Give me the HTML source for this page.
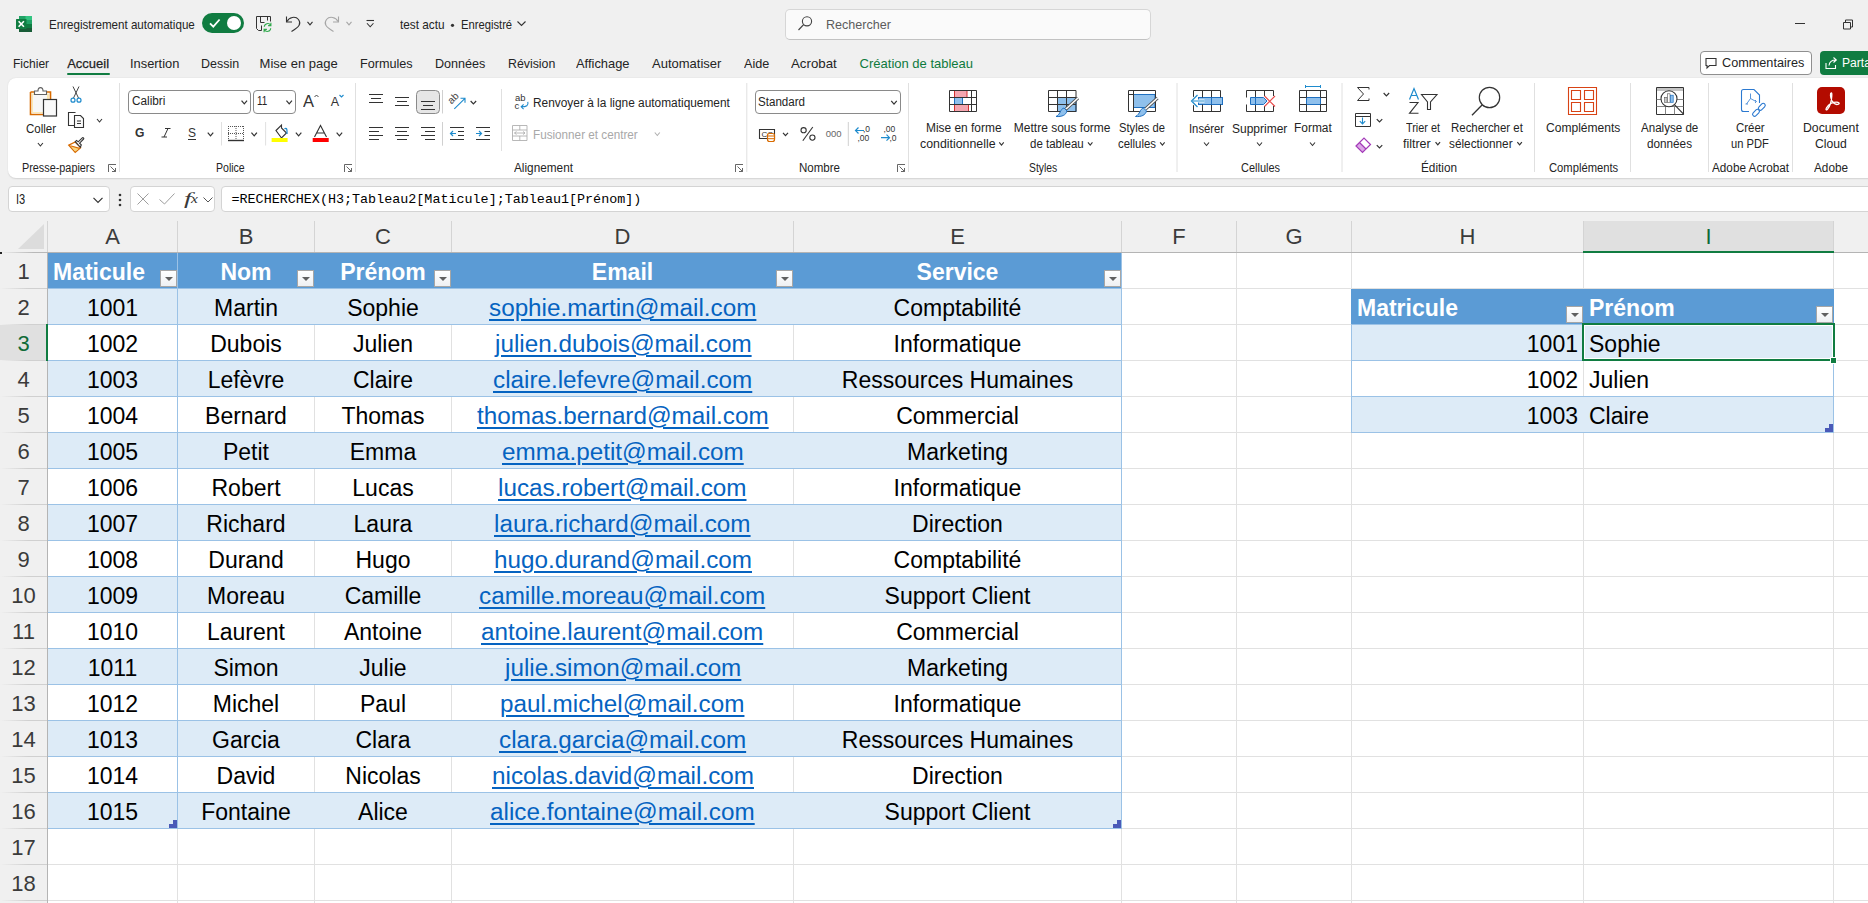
<!DOCTYPE html><html><head><meta charset="utf-8"><style>
html,body{margin:0;padding:0;overflow:hidden}
body{width:1868px;height:903px;overflow:hidden;position:relative;background:#f0f0f0;font-family:"Liberation Sans",sans-serif}
.t{position:absolute;white-space:nowrap}
.r{position:absolute;box-sizing:content-box}
.box{background:#fff;border:1px solid #d4d4d4;border-radius:4px;box-sizing:border-box}
.fb{width:15px;height:15px;border:1px solid #a6a6a6;background:linear-gradient(#fff,#eef0f3)}
.fb:after{content:"";position:absolute;left:3.5px;top:5.8px;border-left:4px solid transparent;border-right:4px solid transparent;border-top:4.5px solid #606060}
</style></head><body>
<div class="r" style="left:48px;top:253px;width:1820px;height:650px;background:#fff;"></div>
<div class="r" style="left:0px;top:221px;width:1868px;height:31px;background:#f0f0f0;"></div>
<div class="r" style="left:0px;top:253px;width:47px;height:650px;background:#f0f0f0;"></div>
<div class="r" style="left:1584px;top:221px;width:249px;height:31px;background:#e0e0e0;"></div>
<div class="r" style="left:0px;top:325px;width:46px;height:35px;background:#e0e0e0;"></div>
<div class="r" style="left:177px;top:221px;width:1px;height:31px;background:#d4d4d4;"></div>
<div class="r" style="left:314px;top:221px;width:1px;height:31px;background:#d4d4d4;"></div>
<div class="r" style="left:451px;top:221px;width:1px;height:31px;background:#d4d4d4;"></div>
<div class="r" style="left:793px;top:221px;width:1px;height:31px;background:#d4d4d4;"></div>
<div class="r" style="left:1121px;top:221px;width:1px;height:31px;background:#d4d4d4;"></div>
<div class="r" style="left:1236px;top:221px;width:1px;height:31px;background:#d4d4d4;"></div>
<div class="r" style="left:1351px;top:221px;width:1px;height:31px;background:#d4d4d4;"></div>
<div class="r" style="left:1583px;top:221px;width:1px;height:31px;background:#d4d4d4;"></div>
<div class="r" style="left:1833px;top:221px;width:1px;height:31px;background:#d4d4d4;"></div>
<div class="r" style="left:48px;top:252px;width:1868px;height:1px;background:#b4b4b4;"></div>
<div class="r" style="left:0px;top:252px;width:48px;height:1px;background:linear-gradient(90deg,#f0f0f0,#b8b8b8 70%);"></div>
<div class="r" style="left:47px;top:221px;width:1px;height:31px;background:#d4d4d4;"></div>
<div class="r" style="left:47px;top:252px;width:1px;height:651px;background:#b4b4b4;"></div>
<div class="r" style="left:0px;top:288px;width:47px;height:1px;background:linear-gradient(90deg,#f0f0f0,#d0d0d0 60%);"></div>
<div class="r" style="left:0px;top:324px;width:47px;height:1px;background:linear-gradient(90deg,#f0f0f0,#d0d0d0 60%);"></div>
<div class="r" style="left:0px;top:360px;width:47px;height:1px;background:linear-gradient(90deg,#f0f0f0,#d0d0d0 60%);"></div>
<div class="r" style="left:0px;top:396px;width:47px;height:1px;background:linear-gradient(90deg,#f0f0f0,#d0d0d0 60%);"></div>
<div class="r" style="left:0px;top:432px;width:47px;height:1px;background:linear-gradient(90deg,#f0f0f0,#d0d0d0 60%);"></div>
<div class="r" style="left:0px;top:468px;width:47px;height:1px;background:linear-gradient(90deg,#f0f0f0,#d0d0d0 60%);"></div>
<div class="r" style="left:0px;top:504px;width:47px;height:1px;background:linear-gradient(90deg,#f0f0f0,#d0d0d0 60%);"></div>
<div class="r" style="left:0px;top:540px;width:47px;height:1px;background:linear-gradient(90deg,#f0f0f0,#d0d0d0 60%);"></div>
<div class="r" style="left:0px;top:576px;width:47px;height:1px;background:linear-gradient(90deg,#f0f0f0,#d0d0d0 60%);"></div>
<div class="r" style="left:0px;top:612px;width:47px;height:1px;background:linear-gradient(90deg,#f0f0f0,#d0d0d0 60%);"></div>
<div class="r" style="left:0px;top:648px;width:47px;height:1px;background:linear-gradient(90deg,#f0f0f0,#d0d0d0 60%);"></div>
<div class="r" style="left:0px;top:684px;width:47px;height:1px;background:linear-gradient(90deg,#f0f0f0,#d0d0d0 60%);"></div>
<div class="r" style="left:0px;top:720px;width:47px;height:1px;background:linear-gradient(90deg,#f0f0f0,#d0d0d0 60%);"></div>
<div class="r" style="left:0px;top:756px;width:47px;height:1px;background:linear-gradient(90deg,#f0f0f0,#d0d0d0 60%);"></div>
<div class="r" style="left:0px;top:792px;width:47px;height:1px;background:linear-gradient(90deg,#f0f0f0,#d0d0d0 60%);"></div>
<div class="r" style="left:0px;top:828px;width:47px;height:1px;background:linear-gradient(90deg,#f0f0f0,#d0d0d0 60%);"></div>
<div class="r" style="left:0px;top:864px;width:47px;height:1px;background:linear-gradient(90deg,#f0f0f0,#d0d0d0 60%);"></div>
<div class="r" style="left:0px;top:900px;width:47px;height:1px;background:linear-gradient(90deg,#f0f0f0,#d0d0d0 60%);"></div>
<div class="r" style="left:0px;top:252px;width:2px;height:2px;background:#222;"></div>
<svg class="r" style="left:14px;top:222px;" width="32" height="30" viewBox="0 0 32 30" fill="none"><path d="M4 27 L30 27 L30 2 Z" fill="#dcdcdc"/></svg>
<div class="r" style="left:177px;top:253px;width:1px;height:650px;background:#e1e1e1;"></div>
<div class="r" style="left:314px;top:253px;width:1px;height:650px;background:#e1e1e1;"></div>
<div class="r" style="left:451px;top:253px;width:1px;height:650px;background:#e1e1e1;"></div>
<div class="r" style="left:793px;top:253px;width:1px;height:650px;background:#e1e1e1;"></div>
<div class="r" style="left:1121px;top:253px;width:1px;height:650px;background:#e1e1e1;"></div>
<div class="r" style="left:1236px;top:253px;width:1px;height:650px;background:#e1e1e1;"></div>
<div class="r" style="left:1351px;top:253px;width:1px;height:650px;background:#e1e1e1;"></div>
<div class="r" style="left:1583px;top:253px;width:1px;height:650px;background:#e1e1e1;"></div>
<div class="r" style="left:1833px;top:253px;width:1px;height:650px;background:#e1e1e1;"></div>
<div class="r" style="left:48px;top:288px;width:1820px;height:1px;background:#e1e1e1;"></div>
<div class="r" style="left:48px;top:324px;width:1820px;height:1px;background:#e1e1e1;"></div>
<div class="r" style="left:48px;top:360px;width:1820px;height:1px;background:#e1e1e1;"></div>
<div class="r" style="left:48px;top:396px;width:1820px;height:1px;background:#e1e1e1;"></div>
<div class="r" style="left:48px;top:432px;width:1820px;height:1px;background:#e1e1e1;"></div>
<div class="r" style="left:48px;top:468px;width:1820px;height:1px;background:#e1e1e1;"></div>
<div class="r" style="left:48px;top:504px;width:1820px;height:1px;background:#e1e1e1;"></div>
<div class="r" style="left:48px;top:540px;width:1820px;height:1px;background:#e1e1e1;"></div>
<div class="r" style="left:48px;top:576px;width:1820px;height:1px;background:#e1e1e1;"></div>
<div class="r" style="left:48px;top:612px;width:1820px;height:1px;background:#e1e1e1;"></div>
<div class="r" style="left:48px;top:648px;width:1820px;height:1px;background:#e1e1e1;"></div>
<div class="r" style="left:48px;top:684px;width:1820px;height:1px;background:#e1e1e1;"></div>
<div class="r" style="left:48px;top:720px;width:1820px;height:1px;background:#e1e1e1;"></div>
<div class="r" style="left:48px;top:756px;width:1820px;height:1px;background:#e1e1e1;"></div>
<div class="r" style="left:48px;top:792px;width:1820px;height:1px;background:#e1e1e1;"></div>
<div class="r" style="left:48px;top:828px;width:1820px;height:1px;background:#e1e1e1;"></div>
<div class="r" style="left:48px;top:864px;width:1820px;height:1px;background:#e1e1e1;"></div>
<div class="r" style="left:48px;top:900px;width:1820px;height:1px;background:#e1e1e1;"></div>
<div class="t" style="left:105.16px;top:226.38px;font-size:22px;line-height:22px;color:#3b3b3b;font-family:'Liberation Sans', sans-serif;">A</div>
<div class="t" style="left:238.66px;top:226.38px;font-size:22px;line-height:22px;color:#3b3b3b;font-family:'Liberation Sans', sans-serif;">B</div>
<div class="t" style="left:375.06px;top:226.38px;font-size:22px;line-height:22px;color:#3b3b3b;font-family:'Liberation Sans', sans-serif;">C</div>
<div class="t" style="left:614.56px;top:226.38px;font-size:22px;line-height:22px;color:#3b3b3b;font-family:'Liberation Sans', sans-serif;">D</div>
<div class="t" style="left:950.16px;top:226.38px;font-size:22px;line-height:22px;color:#3b3b3b;font-family:'Liberation Sans', sans-serif;">E</div>
<div class="t" style="left:1172.28px;top:226.38px;font-size:22px;line-height:22px;color:#3b3b3b;font-family:'Liberation Sans', sans-serif;">F</div>
<div class="t" style="left:1285.44px;top:226.38px;font-size:22px;line-height:22px;color:#3b3b3b;font-family:'Liberation Sans', sans-serif;">G</div>
<div class="t" style="left:1459.56px;top:226.38px;font-size:22px;line-height:22px;color:#3b3b3b;font-family:'Liberation Sans', sans-serif;">H</div>
<div class="t" style="left:1705.44px;top:226.38px;font-size:22px;line-height:22px;color:#0f6b37;font-family:'Liberation Sans', sans-serif;">I</div>
<div class="r" style="left:1583px;top:251px;width:251px;height:2px;background:#107c41;"></div>
<div class="r" style="left:46px;top:324px;width:2px;height:37px;background:#107c41;"></div>
<div class="t" style="left:17.38px;top:261.38px;font-size:22px;line-height:22px;color:#3b3b3b;font-family:'Liberation Sans', sans-serif;">1</div>
<div class="t" style="left:17.38px;top:297.38px;font-size:22px;line-height:22px;color:#3b3b3b;font-family:'Liberation Sans', sans-serif;">2</div>
<div class="t" style="left:17.38px;top:333.38px;font-size:22px;line-height:22px;color:#0f6b37;font-family:'Liberation Sans', sans-serif;">3</div>
<div class="t" style="left:17.38px;top:369.38px;font-size:22px;line-height:22px;color:#3b3b3b;font-family:'Liberation Sans', sans-serif;">4</div>
<div class="t" style="left:17.38px;top:405.38px;font-size:22px;line-height:22px;color:#3b3b3b;font-family:'Liberation Sans', sans-serif;">5</div>
<div class="t" style="left:17.38px;top:441.38px;font-size:22px;line-height:22px;color:#3b3b3b;font-family:'Liberation Sans', sans-serif;">6</div>
<div class="t" style="left:17.38px;top:477.38px;font-size:22px;line-height:22px;color:#3b3b3b;font-family:'Liberation Sans', sans-serif;">7</div>
<div class="t" style="left:17.38px;top:513.38px;font-size:22px;line-height:22px;color:#3b3b3b;font-family:'Liberation Sans', sans-serif;">8</div>
<div class="t" style="left:17.38px;top:549.38px;font-size:22px;line-height:22px;color:#3b3b3b;font-family:'Liberation Sans', sans-serif;">9</div>
<div class="t" style="left:11.27px;top:585.38px;font-size:22px;line-height:22px;color:#3b3b3b;font-family:'Liberation Sans', sans-serif;">10</div>
<div class="t" style="left:12.08px;top:621.38px;font-size:22px;line-height:22px;color:#3b3b3b;font-family:'Liberation Sans', sans-serif;">11</div>
<div class="t" style="left:11.27px;top:657.38px;font-size:22px;line-height:22px;color:#3b3b3b;font-family:'Liberation Sans', sans-serif;">12</div>
<div class="t" style="left:11.27px;top:693.38px;font-size:22px;line-height:22px;color:#3b3b3b;font-family:'Liberation Sans', sans-serif;">13</div>
<div class="t" style="left:11.27px;top:729.38px;font-size:22px;line-height:22px;color:#3b3b3b;font-family:'Liberation Sans', sans-serif;">14</div>
<div class="t" style="left:11.27px;top:765.38px;font-size:22px;line-height:22px;color:#3b3b3b;font-family:'Liberation Sans', sans-serif;">15</div>
<div class="t" style="left:11.27px;top:801.38px;font-size:22px;line-height:22px;color:#3b3b3b;font-family:'Liberation Sans', sans-serif;">16</div>
<div class="t" style="left:11.27px;top:837.38px;font-size:22px;line-height:22px;color:#3b3b3b;font-family:'Liberation Sans', sans-serif;">17</div>
<div class="t" style="left:11.27px;top:873.38px;font-size:22px;line-height:22px;color:#3b3b3b;font-family:'Liberation Sans', sans-serif;">18</div>
<div class="r" style="left:48px;top:253px;width:1073px;height:35px;background:#5b9bd5;"></div>
<div class="r" style="left:48px;top:288px;width:1074px;height:1px;background:#9bc2e6;"></div>
<div class="r" style="left:48px;top:289px;width:1073px;height:35px;background:#ddebf7;"></div>
<div class="r" style="left:48px;top:324px;width:1074px;height:1px;background:#9bc2e6;"></div>
<div class="r" style="left:48px;top:360px;width:1074px;height:1px;background:#9bc2e6;"></div>
<div class="r" style="left:48px;top:361px;width:1073px;height:35px;background:#ddebf7;"></div>
<div class="r" style="left:48px;top:396px;width:1074px;height:1px;background:#9bc2e6;"></div>
<div class="r" style="left:48px;top:432px;width:1074px;height:1px;background:#9bc2e6;"></div>
<div class="r" style="left:48px;top:433px;width:1073px;height:35px;background:#ddebf7;"></div>
<div class="r" style="left:48px;top:468px;width:1074px;height:1px;background:#9bc2e6;"></div>
<div class="r" style="left:48px;top:504px;width:1074px;height:1px;background:#9bc2e6;"></div>
<div class="r" style="left:48px;top:505px;width:1073px;height:35px;background:#ddebf7;"></div>
<div class="r" style="left:48px;top:540px;width:1074px;height:1px;background:#9bc2e6;"></div>
<div class="r" style="left:48px;top:576px;width:1074px;height:1px;background:#9bc2e6;"></div>
<div class="r" style="left:48px;top:577px;width:1073px;height:35px;background:#ddebf7;"></div>
<div class="r" style="left:48px;top:612px;width:1074px;height:1px;background:#9bc2e6;"></div>
<div class="r" style="left:48px;top:648px;width:1074px;height:1px;background:#9bc2e6;"></div>
<div class="r" style="left:48px;top:649px;width:1073px;height:35px;background:#ddebf7;"></div>
<div class="r" style="left:48px;top:684px;width:1074px;height:1px;background:#9bc2e6;"></div>
<div class="r" style="left:48px;top:720px;width:1074px;height:1px;background:#9bc2e6;"></div>
<div class="r" style="left:48px;top:721px;width:1073px;height:35px;background:#ddebf7;"></div>
<div class="r" style="left:48px;top:756px;width:1074px;height:1px;background:#9bc2e6;"></div>
<div class="r" style="left:48px;top:792px;width:1074px;height:1px;background:#9bc2e6;"></div>
<div class="r" style="left:48px;top:793px;width:1073px;height:35px;background:#ddebf7;"></div>
<div class="r" style="left:48px;top:828px;width:1074px;height:1px;background:#9bc2e6;"></div>
<div class="r" style="left:177px;top:253px;width:1px;height:575px;background:#9bc2e6;"></div>
<div class="r" style="left:1121px;top:253px;width:1px;height:576px;background:#9bc2e6;"></div>
<svg class="r" style="left:169px;top:820px;" width="8" height="8" viewBox="0 0 8 8" fill="none"><path d="M8 0 V8 H0 V4 H4 V0 Z" fill="#4a5ab8"/></svg>
<svg class="r" style="left:1113px;top:820px;" width="8" height="8" viewBox="0 0 8 8" fill="none"><path d="M8 0 V8 H0 V4 H4 V0 Z" fill="#4a5ab8"/></svg>
<div class="t" style="left:53.00px;top:260.53px;font-size:23px;line-height:23px;color:#fff;font-family:'Liberation Sans', sans-serif;font-weight:700;">Maticule</div>
<div class="r fb" style="left:160px;top:270px"></div>
<div class="t" style="left:220.45px;top:260.53px;font-size:23px;line-height:23px;color:#fff;font-family:'Liberation Sans', sans-serif;font-weight:700;">Nom</div>
<div class="r fb" style="left:297px;top:270px"></div>
<div class="t" style="left:340.19px;top:260.53px;font-size:23px;line-height:23px;color:#fff;font-family:'Liberation Sans', sans-serif;font-weight:700;">Prénom</div>
<div class="r fb" style="left:434px;top:270px"></div>
<div class="t" style="left:591.82px;top:260.53px;font-size:23px;line-height:23px;color:#fff;font-family:'Liberation Sans', sans-serif;font-weight:700;">Email</div>
<div class="r fb" style="left:776px;top:270px"></div>
<div class="t" style="left:916.57px;top:260.53px;font-size:23px;line-height:23px;color:#fff;font-family:'Liberation Sans', sans-serif;font-weight:700;">Service</div>
<div class="r fb" style="left:1104px;top:270px"></div>
<div class="t" style="left:86.91px;top:296.53px;font-size:23px;line-height:23px;color:#000;font-family:'Liberation Sans', sans-serif;">1001</div>
<div class="t" style="left:214.05px;top:296.53px;font-size:23px;line-height:23px;color:#000;font-family:'Liberation Sans', sans-serif;">Martin</div>
<div class="t" style="left:347.19px;top:296.53px;font-size:23px;line-height:23px;color:#000;font-family:'Liberation Sans', sans-serif;">Sophie</div>
<div class="t" style="left:488.81px;top:296.53px;font-size:23px;line-height:23px;color:#0563c1;font-family:'Liberation Sans', sans-serif;transform:scaleX(1.0550);transform-origin:0 0;text-decoration:underline;text-decoration-thickness:2px;text-underline-offset:3px;">sophie.martin@mail.com</div>
<div class="t" style="left:893.58px;top:296.53px;font-size:23px;line-height:23px;color:#000;font-family:'Liberation Sans', sans-serif;">Comptabilité</div>
<div class="t" style="left:86.91px;top:332.53px;font-size:23px;line-height:23px;color:#000;font-family:'Liberation Sans', sans-serif;">1002</div>
<div class="t" style="left:210.20px;top:332.53px;font-size:23px;line-height:23px;color:#000;font-family:'Liberation Sans', sans-serif;">Dubois</div>
<div class="t" style="left:352.95px;top:332.53px;font-size:23px;line-height:23px;color:#000;font-family:'Liberation Sans', sans-serif;">Julien</div>
<div class="t" style="left:494.50px;top:332.53px;font-size:23px;line-height:23px;color:#0563c1;font-family:'Liberation Sans', sans-serif;transform:scaleX(1.0550);transform-origin:0 0;text-decoration:underline;text-decoration-thickness:2px;text-underline-offset:3px;">julien.dubois@mail.com</div>
<div class="t" style="left:893.57px;top:332.53px;font-size:23px;line-height:23px;color:#000;font-family:'Liberation Sans', sans-serif;">Informatique</div>
<div class="t" style="left:86.91px;top:368.53px;font-size:23px;line-height:23px;color:#000;font-family:'Liberation Sans', sans-serif;">1003</div>
<div class="t" style="left:207.65px;top:368.53px;font-size:23px;line-height:23px;color:#000;font-family:'Liberation Sans', sans-serif;">Lefèvre</div>
<div class="t" style="left:352.96px;top:368.53px;font-size:23px;line-height:23px;color:#000;font-family:'Liberation Sans', sans-serif;">Claire</div>
<div class="t" style="left:492.86px;top:368.53px;font-size:23px;line-height:23px;color:#0563c1;font-family:'Liberation Sans', sans-serif;transform:scaleX(1.0550);transform-origin:0 0;text-decoration:underline;text-decoration-thickness:2px;text-underline-offset:3px;">claire.lefevre@mail.com</div>
<div class="t" style="left:841.81px;top:368.53px;font-size:23px;line-height:23px;color:#000;font-family:'Liberation Sans', sans-serif;">Ressources Humaines</div>
<div class="t" style="left:86.91px;top:404.53px;font-size:23px;line-height:23px;color:#000;font-family:'Liberation Sans', sans-serif;">1004</div>
<div class="t" style="left:205.08px;top:404.53px;font-size:23px;line-height:23px;color:#000;font-family:'Liberation Sans', sans-serif;">Bernard</div>
<div class="t" style="left:341.46px;top:404.53px;font-size:23px;line-height:23px;color:#000;font-family:'Liberation Sans', sans-serif;">Thomas</div>
<div class="t" style="left:476.67px;top:404.53px;font-size:23px;line-height:23px;color:#0563c1;font-family:'Liberation Sans', sans-serif;transform:scaleX(1.0550);transform-origin:0 0;text-decoration:underline;text-decoration-thickness:2px;text-underline-offset:3px;">thomas.bernard@mail.com</div>
<div class="t" style="left:896.16px;top:404.53px;font-size:23px;line-height:23px;color:#000;font-family:'Liberation Sans', sans-serif;">Commercial</div>
<div class="t" style="left:86.91px;top:440.53px;font-size:23px;line-height:23px;color:#000;font-family:'Liberation Sans', sans-serif;">1005</div>
<div class="t" style="left:222.99px;top:440.53px;font-size:23px;line-height:23px;color:#000;font-family:'Liberation Sans', sans-serif;">Petit</div>
<div class="t" style="left:349.76px;top:440.53px;font-size:23px;line-height:23px;color:#000;font-family:'Liberation Sans', sans-serif;">Emma</div>
<div class="t" style="left:501.64px;top:440.53px;font-size:23px;line-height:23px;color:#0563c1;font-family:'Liberation Sans', sans-serif;transform:scaleX(1.0550);transform-origin:0 0;text-decoration:underline;text-decoration-thickness:2px;text-underline-offset:3px;">emma.petit@mail.com</div>
<div class="t" style="left:907.00px;top:440.53px;font-size:23px;line-height:23px;color:#000;font-family:'Liberation Sans', sans-serif;">Marketing</div>
<div class="t" style="left:86.91px;top:476.53px;font-size:23px;line-height:23px;color:#000;font-family:'Liberation Sans', sans-serif;">1006</div>
<div class="t" style="left:211.49px;top:476.53px;font-size:23px;line-height:23px;color:#000;font-family:'Liberation Sans', sans-serif;">Robert</div>
<div class="t" style="left:352.32px;top:476.53px;font-size:23px;line-height:23px;color:#000;font-family:'Liberation Sans', sans-serif;">Lucas</div>
<div class="t" style="left:498.26px;top:476.53px;font-size:23px;line-height:23px;color:#0563c1;font-family:'Liberation Sans', sans-serif;transform:scaleX(1.0550);transform-origin:0 0;text-decoration:underline;text-decoration-thickness:2px;text-underline-offset:3px;">lucas.robert@mail.com</div>
<div class="t" style="left:893.57px;top:476.53px;font-size:23px;line-height:23px;color:#000;font-family:'Liberation Sans', sans-serif;">Informatique</div>
<div class="t" style="left:86.91px;top:512.53px;font-size:23px;line-height:23px;color:#000;font-family:'Liberation Sans', sans-serif;">1007</div>
<div class="t" style="left:206.37px;top:512.53px;font-size:23px;line-height:23px;color:#000;font-family:'Liberation Sans', sans-serif;">Richard</div>
<div class="t" style="left:353.58px;top:512.53px;font-size:23px;line-height:23px;color:#000;font-family:'Liberation Sans', sans-serif;">Laura</div>
<div class="t" style="left:494.21px;top:512.53px;font-size:23px;line-height:23px;color:#0563c1;font-family:'Liberation Sans', sans-serif;transform:scaleX(1.0550);transform-origin:0 0;text-decoration:underline;text-decoration-thickness:2px;text-underline-offset:3px;">laura.richard@mail.com</div>
<div class="t" style="left:912.12px;top:512.53px;font-size:23px;line-height:23px;color:#000;font-family:'Liberation Sans', sans-serif;">Direction</div>
<div class="t" style="left:86.91px;top:548.53px;font-size:23px;line-height:23px;color:#000;font-family:'Liberation Sans', sans-serif;">1008</div>
<div class="t" style="left:208.28px;top:548.53px;font-size:23px;line-height:23px;color:#000;font-family:'Liberation Sans', sans-serif;">Durand</div>
<div class="t" style="left:355.50px;top:548.53px;font-size:23px;line-height:23px;color:#000;font-family:'Liberation Sans', sans-serif;">Hugo</div>
<div class="t" style="left:493.51px;top:548.53px;font-size:23px;line-height:23px;color:#0563c1;font-family:'Liberation Sans', sans-serif;transform:scaleX(1.0550);transform-origin:0 0;text-decoration:underline;text-decoration-thickness:2px;text-underline-offset:3px;">hugo.durand@mail.com</div>
<div class="t" style="left:893.58px;top:548.53px;font-size:23px;line-height:23px;color:#000;font-family:'Liberation Sans', sans-serif;">Comptabilité</div>
<div class="t" style="left:86.91px;top:584.53px;font-size:23px;line-height:23px;color:#000;font-family:'Liberation Sans', sans-serif;">1009</div>
<div class="t" style="left:207.00px;top:584.53px;font-size:23px;line-height:23px;color:#000;font-family:'Liberation Sans', sans-serif;">Moreau</div>
<div class="t" style="left:344.66px;top:584.53px;font-size:23px;line-height:23px;color:#000;font-family:'Liberation Sans', sans-serif;">Camille</div>
<div class="t" style="left:479.39px;top:584.53px;font-size:23px;line-height:23px;color:#0563c1;font-family:'Liberation Sans', sans-serif;transform:scaleX(1.0550);transform-origin:0 0;text-decoration:underline;text-decoration-thickness:2px;text-underline-offset:3px;">camille.moreau@mail.com</div>
<div class="t" style="left:884.62px;top:584.53px;font-size:23px;line-height:23px;color:#000;font-family:'Liberation Sans', sans-serif;">Support Client</div>
<div class="t" style="left:86.91px;top:620.53px;font-size:23px;line-height:23px;color:#000;font-family:'Liberation Sans', sans-serif;">1010</div>
<div class="t" style="left:206.99px;top:620.53px;font-size:23px;line-height:23px;color:#000;font-family:'Liberation Sans', sans-serif;">Laurent</div>
<div class="t" style="left:343.99px;top:620.53px;font-size:23px;line-height:23px;color:#000;font-family:'Liberation Sans', sans-serif;">Antoine</div>
<div class="t" style="left:481.37px;top:620.53px;font-size:23px;line-height:23px;color:#0563c1;font-family:'Liberation Sans', sans-serif;transform:scaleX(1.0550);transform-origin:0 0;text-decoration:underline;text-decoration-thickness:2px;text-underline-offset:3px;">antoine.laurent@mail.com</div>
<div class="t" style="left:896.16px;top:620.53px;font-size:23px;line-height:23px;color:#000;font-family:'Liberation Sans', sans-serif;">Commercial</div>
<div class="t" style="left:87.78px;top:656.53px;font-size:23px;line-height:23px;color:#000;font-family:'Liberation Sans', sans-serif;">1011</div>
<div class="t" style="left:213.40px;top:656.53px;font-size:23px;line-height:23px;color:#000;font-family:'Liberation Sans', sans-serif;">Simon</div>
<div class="t" style="left:359.34px;top:656.53px;font-size:23px;line-height:23px;color:#000;font-family:'Liberation Sans', sans-serif;">Julie</div>
<div class="t" style="left:504.63px;top:656.53px;font-size:23px;line-height:23px;color:#0563c1;font-family:'Liberation Sans', sans-serif;transform:scaleX(1.0550);transform-origin:0 0;text-decoration:underline;text-decoration-thickness:2px;text-underline-offset:3px;">julie.simon@mail.com</div>
<div class="t" style="left:907.00px;top:656.53px;font-size:23px;line-height:23px;color:#000;font-family:'Liberation Sans', sans-serif;">Marketing</div>
<div class="t" style="left:86.91px;top:692.53px;font-size:23px;line-height:23px;color:#000;font-family:'Liberation Sans', sans-serif;">1012</div>
<div class="t" style="left:212.76px;top:692.53px;font-size:23px;line-height:23px;color:#000;font-family:'Liberation Sans', sans-serif;">Michel</div>
<div class="t" style="left:359.99px;top:692.53px;font-size:23px;line-height:23px;color:#000;font-family:'Liberation Sans', sans-serif;">Paul</div>
<div class="t" style="left:500.28px;top:692.53px;font-size:23px;line-height:23px;color:#0563c1;font-family:'Liberation Sans', sans-serif;transform:scaleX(1.0550);transform-origin:0 0;text-decoration:underline;text-decoration-thickness:2px;text-underline-offset:3px;">paul.michel@mail.com</div>
<div class="t" style="left:893.57px;top:692.53px;font-size:23px;line-height:23px;color:#000;font-family:'Liberation Sans', sans-serif;">Informatique</div>
<div class="t" style="left:86.91px;top:728.53px;font-size:23px;line-height:23px;color:#000;font-family:'Liberation Sans', sans-serif;">1013</div>
<div class="t" style="left:212.12px;top:728.53px;font-size:23px;line-height:23px;color:#000;font-family:'Liberation Sans', sans-serif;">Garcia</div>
<div class="t" style="left:355.50px;top:728.53px;font-size:23px;line-height:23px;color:#000;font-family:'Liberation Sans', sans-serif;">Clara</div>
<div class="t" style="left:498.93px;top:728.53px;font-size:23px;line-height:23px;color:#0563c1;font-family:'Liberation Sans', sans-serif;transform:scaleX(1.0550);transform-origin:0 0;text-decoration:underline;text-decoration-thickness:2px;text-underline-offset:3px;">clara.garcia@mail.com</div>
<div class="t" style="left:841.81px;top:728.53px;font-size:23px;line-height:23px;color:#000;font-family:'Liberation Sans', sans-serif;">Ressources Humaines</div>
<div class="t" style="left:86.91px;top:764.53px;font-size:23px;line-height:23px;color:#000;font-family:'Liberation Sans', sans-serif;">1014</div>
<div class="t" style="left:216.59px;top:764.53px;font-size:23px;line-height:23px;color:#000;font-family:'Liberation Sans', sans-serif;">David</div>
<div class="t" style="left:345.29px;top:764.53px;font-size:23px;line-height:23px;color:#000;font-family:'Liberation Sans', sans-serif;">Nicolas</div>
<div class="t" style="left:491.51px;top:764.53px;font-size:23px;line-height:23px;color:#0563c1;font-family:'Liberation Sans', sans-serif;transform:scaleX(1.0550);transform-origin:0 0;text-decoration:underline;text-decoration-thickness:2px;text-underline-offset:3px;">nicolas.david@mail.com</div>
<div class="t" style="left:912.12px;top:764.53px;font-size:23px;line-height:23px;color:#000;font-family:'Liberation Sans', sans-serif;">Direction</div>
<div class="t" style="left:86.91px;top:800.53px;font-size:23px;line-height:23px;color:#000;font-family:'Liberation Sans', sans-serif;">1015</div>
<div class="t" style="left:201.24px;top:800.53px;font-size:23px;line-height:23px;color:#000;font-family:'Liberation Sans', sans-serif;">Fontaine</div>
<div class="t" style="left:358.07px;top:800.53px;font-size:23px;line-height:23px;color:#000;font-family:'Liberation Sans', sans-serif;">Alice</div>
<div class="t" style="left:490.15px;top:800.53px;font-size:23px;line-height:23px;color:#0563c1;font-family:'Liberation Sans', sans-serif;transform:scaleX(1.0550);transform-origin:0 0;text-decoration:underline;text-decoration-thickness:2px;text-underline-offset:3px;">alice.fontaine@mail.com</div>
<div class="t" style="left:884.62px;top:800.53px;font-size:23px;line-height:23px;color:#000;font-family:'Liberation Sans', sans-serif;">Support Client</div>
<div class="r" style="left:1351px;top:289px;width:483px;height:35px;background:#5b9bd5;"></div>
<div class="r" style="left:1351px;top:324px;width:483px;height:1px;background:#9bc2e6;"></div>
<div class="r" style="left:1351px;top:325px;width:483px;height:35px;background:#ddebf7;"></div>
<div class="r" style="left:1351px;top:360px;width:483px;height:1px;background:#9bc2e6;"></div>
<div class="r" style="left:1351px;top:396px;width:483px;height:1px;background:#9bc2e6;"></div>
<div class="r" style="left:1351px;top:397px;width:483px;height:35px;background:#ddebf7;"></div>
<div class="r" style="left:1351px;top:432px;width:483px;height:1px;background:#9bc2e6;"></div>
<div class="r" style="left:1351px;top:324px;width:1px;height:109px;background:#9bc2e6;"></div>
<div class="r" style="left:1833px;top:324px;width:1px;height:109px;background:#9bc2e6;"></div>
<svg class="r" style="left:1825px;top:424px;" width="8" height="8" viewBox="0 0 8 8" fill="none"><path d="M8 0 V8 H0 V4 H4 V0 Z" fill="#4a5ab8"/></svg>
<div class="t" style="left:1357.00px;top:296.53px;font-size:23px;line-height:23px;color:#fff;font-family:'Liberation Sans', sans-serif;font-weight:700;">Matricule</div>
<div class="t" style="left:1589.00px;top:296.53px;font-size:23px;line-height:23px;color:#fff;font-family:'Liberation Sans', sans-serif;font-weight:700;">Prénom</div>
<div class="r fb" style="left:1566px;top:306px"></div>
<div class="r fb" style="left:1816px;top:306px"></div>
<div class="t" style="left:1526.83px;top:332.53px;font-size:23px;line-height:23px;color:#000;font-family:'Liberation Sans', sans-serif;">1001</div>
<div class="t" style="left:1589.00px;top:332.53px;font-size:23px;line-height:23px;color:#000;font-family:'Liberation Sans', sans-serif;">Sophie</div>
<div class="t" style="left:1526.83px;top:368.53px;font-size:23px;line-height:23px;color:#000;font-family:'Liberation Sans', sans-serif;">1002</div>
<div class="t" style="left:1589.00px;top:368.53px;font-size:23px;line-height:23px;color:#000;font-family:'Liberation Sans', sans-serif;">Julien</div>
<div class="t" style="left:1526.83px;top:404.53px;font-size:23px;line-height:23px;color:#000;font-family:'Liberation Sans', sans-serif;">1003</div>
<div class="t" style="left:1589.00px;top:404.53px;font-size:23px;line-height:23px;color:#000;font-family:'Liberation Sans', sans-serif;">Claire</div>
<div class="r" style="left:1582px;top:323px;width:249px;height:34px;border:2px solid #107c41;"></div>
<div class="r" style="left:1584px;top:325px;width:249px;height:34px;border:1px solid #fff;box-sizing:border-box"></div>
<div class="r" style="left:1830px;top:357px;width:5px;height:5px;background:#107c41;border:1px solid #fff;"></div>
<div class="r box" style="left:8px;top:186px;width:102px;height:26px"></div>
<div class="t" style="left:16.00px;top:192.15px;font-size:14px;line-height:14px;color:#1a1a1a;font-family:'Liberation Sans', sans-serif;transform:scaleX(0.7879);transform-origin:0 0;">I3</div>
<svg class="r" style="left:92px;top:196px;" width="12" height="8" viewBox="0 0 12 8" fill="none"><path d="M1.5 1.8 L6 6.3 L10.5 1.8" stroke="#333" stroke-width="1.2"/></svg>
<svg class="r" style="left:116px;top:192px;" width="8" height="16" viewBox="0 0 8 16" fill="none"><circle cx="4" cy="3" r="1.3" fill="#333"/><circle cx="4" cy="8" r="1.3" fill="#333"/><circle cx="4" cy="13" r="1.3" fill="#333"/></svg>
<div class="r box" style="left:130px;top:186px;width:85px;height:26px"></div>
<div class="r box" style="left:221px;top:186px;width:1700px;height:26px"></div>
<svg class="r" style="left:130px;top:186px;" width="90" height="26" viewBox="0 0 90 26" fill="none"><path d="M7.5 7.5 L18.5 18.5 M18.5 7.5 L7.5 18.5" stroke="#9e9e9e" stroke-width="1"/><path d="M29.5 13.5 L34.5 18 L44.5 7.5" stroke="#9e9e9e" stroke-width="1"/><path d="M73.5 11.5 L78 16 L82.5 11.5" stroke="#555" stroke-width="1"/></svg>
<div class="t" style="left:184.00px;top:190.11px;font-size:17px;line-height:17px;color:#3a3a3a;font-family:'Liberation Serif', serif;font-style:italic;transform:scaleX(1.6423);transform-origin:0 0;">f</div>
<div class="t" style="left:191.20px;top:193.42px;font-size:12.5px;line-height:12.5px;color:#333;font-family:'Liberation Serif', serif;font-style:italic;transform:scaleX(1.2254);transform-origin:0 0;">x</div>
<div class="t" style="left:231.50px;top:192.66px;font-size:13.4px;line-height:13.4px;color:#000;font-family:'Liberation Mono', monospace;">=RECHERCHEX(H3;Tableau2[Maticule];Tableau1[Prénom])</div>
<div class="r" style="left:8px;top:78px;width:1880px;height:99.5px;background:#fff;border-radius:8px;box-shadow:0 0.5px 1.5px rgba(0,0,0,.12)"></div>
<div class="t" style="left:48.50px;top:17.60px;font-size:13px;line-height:13px;color:#242424;font-family:'Liberation Sans', sans-serif;transform:scaleX(0.8927);transform-origin:0 0;">Enregistrement automatique</div>
<div class="t" style="left:400.00px;top:17.90px;font-size:13px;line-height:13px;color:#242424;font-family:'Liberation Sans', sans-serif;transform:scaleX(0.9076);transform-origin:0 0;">test actu</div>
<div class="t" style="left:460.50px;top:17.90px;font-size:13px;line-height:13px;color:#242424;font-family:'Liberation Sans', sans-serif;transform:scaleX(0.8624);transform-origin:0 0;">Enregistré</div>
<div class="r" style="left:785px;top:9px;width:366px;height:31px;background:#fafafa;border:1px solid #d6d6d6;border-bottom-color:#c2c2c2;border-radius:5px;box-sizing:border-box"></div>
<div class="t" style="left:825.80px;top:18.30px;font-size:13px;line-height:13px;color:#5c5c5c;font-family:'Liberation Sans', sans-serif;transform:scaleX(0.9658);transform-origin:0 0;">Rechercher</div>
<div class="r" style="left:1700px;top:51px;width:112px;height:24px;background:#fff;border:1px solid #8f8f8f;border-radius:4px;box-sizing:border-box"></div>
<div class="t" style="left:1722.00px;top:57.02px;font-size:12.5px;line-height:12.5px;color:#242424;font-family:'Liberation Sans', sans-serif;transform:scaleX(1.0138);transform-origin:0 0;">Commentaires</div>
<div class="r" style="left:1820px;top:51px;width:80px;height:24px;background:#107c41;border-radius:4px"></div>
<div class="t" style="left:1841.60px;top:57.02px;font-size:12.5px;line-height:12.5px;color:#fff;font-family:'Liberation Sans', sans-serif;transform:scaleX(0.9700);transform-origin:0 0;">Partager</div>
<div class="t" style="left:12.60px;top:57.00px;font-size:13px;line-height:13px;color:#242424;font-family:'Liberation Sans', sans-serif;transform:scaleX(0.9253);transform-origin:0 0;">Fichier</div>
<div class="t" style="left:67.20px;top:57.00px;font-size:13px;line-height:13px;color:#242424;font-family:'Liberation Sans', sans-serif;-webkit-text-stroke:0.25px #242424;">Accueil</div>
<div class="t" style="left:130.00px;top:57.00px;font-size:13px;line-height:13px;color:#242424;font-family:'Liberation Sans', sans-serif;transform:scaleX(0.9889);transform-origin:0 0;">Insertion</div>
<div class="t" style="left:201.40px;top:57.00px;font-size:13px;line-height:13px;color:#242424;font-family:'Liberation Sans', sans-serif;transform:scaleX(0.9587);transform-origin:0 0;">Dessin</div>
<div class="t" style="left:259.60px;top:57.00px;font-size:13px;line-height:13px;color:#242424;font-family:'Liberation Sans', sans-serif;">Mise en page</div>
<div class="t" style="left:359.80px;top:57.00px;font-size:13px;line-height:13px;color:#242424;font-family:'Liberation Sans', sans-serif;transform:scaleX(0.9726);transform-origin:0 0;">Formules</div>
<div class="t" style="left:435.30px;top:57.00px;font-size:13px;line-height:13px;color:#242424;font-family:'Liberation Sans', sans-serif;transform:scaleX(0.9685);transform-origin:0 0;">Données</div>
<div class="t" style="left:507.50px;top:57.00px;font-size:13px;line-height:13px;color:#242424;font-family:'Liberation Sans', sans-serif;transform:scaleX(0.9488);transform-origin:0 0;">Révision</div>
<div class="t" style="left:576.00px;top:57.00px;font-size:13px;line-height:13px;color:#242424;font-family:'Liberation Sans', sans-serif;transform:scaleX(0.9914);transform-origin:0 0;">Affichage</div>
<div class="t" style="left:652.00px;top:57.00px;font-size:13px;line-height:13px;color:#242424;font-family:'Liberation Sans', sans-serif;">Automatiser</div>
<div class="t" style="left:744.00px;top:57.00px;font-size:13px;line-height:13px;color:#242424;font-family:'Liberation Sans', sans-serif;transform:scaleX(0.9726);transform-origin:0 0;">Aide</div>
<div class="t" style="left:791.00px;top:57.00px;font-size:13px;line-height:13px;color:#242424;font-family:'Liberation Sans', sans-serif;transform:scaleX(1.0201);transform-origin:0 0;">Acrobat</div>
<div class="t" style="left:859.60px;top:57.00px;font-size:13px;line-height:13px;color:#0e7a3d;font-family:'Liberation Sans', sans-serif;">Création de tableau</div>
<div class="t" style="left:25.70px;top:122.74px;font-size:12px;line-height:12px;color:#242424;font-family:'Liberation Sans', sans-serif;transform:scaleX(0.9603);transform-origin:0 0;">Coller</div>
<div class="t" style="left:21.50px;top:161.54px;font-size:12px;line-height:12px;color:#242424;font-family:'Liberation Sans', sans-serif;transform:scaleX(0.9033);transform-origin:0 0;">Presse-papiers</div>
<div class="t" style="left:215.70px;top:161.74px;font-size:12px;line-height:12px;color:#242424;font-family:'Liberation Sans', sans-serif;transform:scaleX(0.8780);transform-origin:0 0;">Police</div>
<div class="t" style="left:532.50px;top:97.44px;font-size:12px;line-height:12px;color:#242424;font-family:'Liberation Sans', sans-serif;transform:scaleX(0.9905);transform-origin:0 0;">Renvoyer à la ligne automatiquement</div>
<div class="t" style="left:514.00px;top:161.74px;font-size:12px;line-height:12px;color:#242424;font-family:'Liberation Sans', sans-serif;transform:scaleX(0.9827);transform-origin:0 0;">Alignement</div>
<div class="t" style="left:799.00px;top:161.74px;font-size:12px;line-height:12px;color:#242424;font-family:'Liberation Sans', sans-serif;transform:scaleX(0.9605);transform-origin:0 0;">Nombre</div>
<div class="t" style="left:925.50px;top:121.94px;font-size:12px;line-height:12px;color:#242424;font-family:'Liberation Sans', sans-serif;transform:scaleX(0.9932);transform-origin:0 0;">Mise en forme</div>
<div class="t" style="left:919.80px;top:137.74px;font-size:12px;line-height:12px;color:#242424;font-family:'Liberation Sans', sans-serif;transform:scaleX(1.0287);transform-origin:0 0;">conditionnelle</div>
<div class="t" style="left:1013.80px;top:121.94px;font-size:12px;line-height:12px;color:#242424;font-family:'Liberation Sans', sans-serif;">Mettre sous forme</div>
<div class="t" style="left:1029.70px;top:137.74px;font-size:12px;line-height:12px;color:#242424;font-family:'Liberation Sans', sans-serif;transform:scaleX(0.9580);transform-origin:0 0;">de tableau</div>
<div class="t" style="left:1119.10px;top:121.94px;font-size:12px;line-height:12px;color:#242424;font-family:'Liberation Sans', sans-serif;transform:scaleX(0.9320);transform-origin:0 0;">Styles de</div>
<div class="t" style="left:1117.70px;top:137.74px;font-size:12px;line-height:12px;color:#242424;font-family:'Liberation Sans', sans-serif;transform:scaleX(0.9495);transform-origin:0 0;">cellules</div>
<div class="t" style="left:1029.30px;top:161.74px;font-size:12px;line-height:12px;color:#242424;font-family:'Liberation Sans', sans-serif;transform:scaleX(0.8600);transform-origin:0 0;">Styles</div>
<div class="t" style="left:1189.00px;top:123.04px;font-size:12px;line-height:12px;color:#242424;font-family:'Liberation Sans', sans-serif;transform:scaleX(0.9372);transform-origin:0 0;">Insérer</div>
<div class="t" style="left:1232.00px;top:123.04px;font-size:12px;line-height:12px;color:#242424;font-family:'Liberation Sans', sans-serif;">Supprimer</div>
<div class="t" style="left:1294.00px;top:121.74px;font-size:12px;line-height:12px;color:#242424;font-family:'Liberation Sans', sans-serif;transform:scaleX(0.9946);transform-origin:0 0;">Format</div>
<div class="t" style="left:1240.50px;top:161.74px;font-size:12px;line-height:12px;color:#242424;font-family:'Liberation Sans', sans-serif;transform:scaleX(0.9137);transform-origin:0 0;">Cellules</div>
<div class="t" style="left:1405.80px;top:121.94px;font-size:12px;line-height:12px;color:#242424;font-family:'Liberation Sans', sans-serif;transform:scaleX(0.9052);transform-origin:0 0;">Trier et</div>
<div class="t" style="left:1403.10px;top:137.64px;font-size:12px;line-height:12px;color:#242424;font-family:'Liberation Sans', sans-serif;transform:scaleX(1.0389);transform-origin:0 0;">filtrer</div>
<div class="t" style="left:1451.30px;top:121.94px;font-size:12px;line-height:12px;color:#242424;font-family:'Liberation Sans', sans-serif;transform:scaleX(0.9539);transform-origin:0 0;">Rechercher et</div>
<div class="t" style="left:1449.30px;top:137.64px;font-size:12px;line-height:12px;color:#242424;font-family:'Liberation Sans', sans-serif;transform:scaleX(0.9829);transform-origin:0 0;">sélectionner</div>
<div class="t" style="left:1420.50px;top:161.54px;font-size:12px;line-height:12px;color:#242424;font-family:'Liberation Sans', sans-serif;transform:scaleX(0.9810);transform-origin:0 0;">Édition</div>
<div class="t" style="left:1545.50px;top:121.94px;font-size:12px;line-height:12px;color:#242424;font-family:'Liberation Sans', sans-serif;transform:scaleX(1.0050);transform-origin:0 0;">Compléments</div>
<div class="t" style="left:1548.50px;top:161.54px;font-size:12px;line-height:12px;color:#242424;font-family:'Liberation Sans', sans-serif;transform:scaleX(0.9348);transform-origin:0 0;">Compléments</div>
<div class="t" style="left:1640.70px;top:121.94px;font-size:12px;line-height:12px;color:#242424;font-family:'Liberation Sans', sans-serif;transform:scaleX(0.9650);transform-origin:0 0;">Analyse de</div>
<div class="t" style="left:1647.00px;top:137.64px;font-size:12px;line-height:12px;color:#242424;font-family:'Liberation Sans', sans-serif;transform:scaleX(0.9773);transform-origin:0 0;">données</div>
<div class="t" style="left:1735.80px;top:121.94px;font-size:12px;line-height:12px;color:#242424;font-family:'Liberation Sans', sans-serif;transform:scaleX(0.9563);transform-origin:0 0;">Créer</div>
<div class="t" style="left:1731.40px;top:137.64px;font-size:12px;line-height:12px;color:#242424;font-family:'Liberation Sans', sans-serif;transform:scaleX(0.9292);transform-origin:0 0;">un PDF</div>
<div class="t" style="left:1711.80px;top:161.54px;font-size:12px;line-height:12px;color:#242424;font-family:'Liberation Sans', sans-serif;transform:scaleX(0.9780);transform-origin:0 0;">Adobe Acrobat</div>
<div class="t" style="left:1803.00px;top:121.94px;font-size:12px;line-height:12px;color:#242424;font-family:'Liberation Sans', sans-serif;transform:scaleX(1.0202);transform-origin:0 0;">Document</div>
<div class="t" style="left:1815.00px;top:137.64px;font-size:12px;line-height:12px;color:#242424;font-family:'Liberation Sans', sans-serif;transform:scaleX(1.0142);transform-origin:0 0;">Cloud</div>
<div class="t" style="left:1813.60px;top:161.54px;font-size:12px;line-height:12px;color:#242424;font-family:'Liberation Sans', sans-serif;transform:scaleX(0.9797);transform-origin:0 0;">Adobe</div>
<div class="t" style="left:532.50px;top:129.24px;font-size:12px;line-height:12px;color:#a8a8a8;font-family:'Liberation Sans', sans-serif;transform:scaleX(0.9750);transform-origin:0 0;">Fusionner et centrer</div>
<div class="r" style="left:128px;top:90px;width:123px;height:24px;border:1px solid #8a8a8a;border-radius:4px;box-sizing:border-box;background:#fff"></div>
<div class="r" style="left:253px;top:90px;width:43px;height:24px;border:1px solid #8a8a8a;border-radius:4px;box-sizing:border-box;background:#fff"></div>
<div class="r" style="left:755px;top:90px;width:146px;height:24px;border:1px solid #8a8a8a;border-radius:4px;box-sizing:border-box;background:#fff"></div>
<div class="t" style="left:758.00px;top:96.12px;font-size:12.5px;line-height:12.5px;color:#242424;font-family:'Liberation Sans', sans-serif;transform:scaleX(0.9263);transform-origin:0 0;">Standard</div>
<div class="r" style="left:67px;top:73px;width:43px;height:2px;background:#107c41;border-radius:1px;"></div>
<div class="t" style="left:131.60px;top:95.12px;font-size:12.5px;line-height:12.5px;color:#242424;font-family:'Liberation Sans', sans-serif;transform:scaleX(0.9428);transform-origin:0 0;">Calibri</div>
<div class="t" style="left:256.80px;top:95.12px;font-size:12.5px;line-height:12.5px;color:#242424;font-family:'Liberation Sans', sans-serif;transform:scaleX(0.7861);transform-origin:0 0;">11</div>
<div class="t" style="left:135.00px;top:126.00px;font-size:13px;line-height:13px;color:#333;font-family:'Liberation Sans', sans-serif;font-weight:700;transform:scaleX(0.9294);transform-origin:0 0;">G</div>
<div class="t" style="left:188.00px;top:126.00px;font-size:13px;line-height:13px;color:#333;font-family:'Liberation Sans', sans-serif;transform:scaleX(0.9226);transform-origin:0 0;">S</div>
<div class="t" style="left:303.00px;top:92.61px;font-size:17px;line-height:17px;color:#333;font-family:'Liberation Sans', sans-serif;transform:scaleX(0.9701);transform-origin:0 0;">A</div>
<div class="t" style="left:330.70px;top:96.12px;font-size:12.5px;line-height:12.5px;color:#333;font-family:'Liberation Sans', sans-serif;">A</div>
<div class="t" style="left:825.80px;top:128.66px;font-size:9.5px;line-height:9.5px;color:#666;font-family:'Liberation Sans', sans-serif;">000</div>
<div class="t" style="left:514.50px;top:92.96px;font-size:9.5px;line-height:9.5px;color:#333;font-family:'Liberation Sans', sans-serif;transform:scaleX(0.9939);transform-origin:0 0;">ab</div>
<div class="t" style="left:514.50px;top:101.46px;font-size:9.5px;line-height:9.5px;color:#333;font-family:'Liberation Sans', sans-serif;">c</div>
<svg class="r" style="left:0;top:0" width="1868" height="180" viewBox="0 0 1868 180"><rect x="19" y="16" width="13" height="4" rx="0" fill="#33c481" /><rect x="19" y="16" width="6.5" height="4" rx="0" fill="#21a366" /><rect x="19" y="20" width="13" height="4" rx="0" fill="#21a366" /><rect x="19" y="24" width="13" height="4" rx="0" fill="#107c41" /><rect x="19" y="28" width="13" height="4" rx="0" fill="#185c37" /><rect x="16" y="19" width="10.5" height="10" rx="0.5" fill="#107c41" /><path d="M18.6 21.2 L23.9 26.8 M23.9 21.2 L18.6 26.8" stroke="#fff" stroke-width="1.6" fill="none" /><rect x="202" y="13" width="42" height="20" rx="10" fill="#107c41" /><circle cx="234" cy="23" r="7" fill="#fff"/><path d="M210 23.3 L213.3 26.7 L219.6 19.5" stroke="#fff" stroke-width="1.8" fill="none" /><path d="M256.5 16.5 H270.5 V21.5 M256.5 16.5 V28.5 L258.5 30.5 H261.5 V25.5 M260.5 16.5 V22.5 H264.5 M267.5 16.5 V20.5" stroke="#333" stroke-width="1" fill="none" /><path d="M264.3 26.8 A3.4 3.4 0 0 1 270.6 25.2 M270.7 28.2 A3.4 3.4 0 0 1 264.4 29.8 M270.9 22.8 V25.6 H268.1 M264.1 32.2 V29.4 H266.9" stroke="#2da84a" stroke-width="1.1" fill="none" /><path d="M286.5 16.5 V22 H292" stroke="#333" stroke-width="1.1" fill="none" /><path d="M287 21.5 C289 17 295.5 15.8 298.5 19.5 C301.5 23.5 299.5 27 291.5 31.5" stroke="#333" stroke-width="1.1" fill="none" /><path d="M307.5 21.8 L310 24.8 L312.5 21.8" stroke="#333" stroke-width="1.1" fill="none" /><path d="M338.5 16.5 V22 H333" stroke="#a6a6a6" stroke-width="1.1" fill="none" /><path d="M338 21.5 C336 17 329.5 15.8 326.5 19.5 C323.5 23.5 325.5 27 333.5 31.5" stroke="#a6a6a6" stroke-width="1.1" fill="none" /><path d="M346.5 21.8 L349 24.8 L351.5 21.8" stroke="#a6a6a6" stroke-width="1.1" fill="none" /><path d="M366.5 20.5 H374" stroke="#333" stroke-width="1.1" fill="none" /><path d="M366.95 23.25 L370.2 26.75 L373.45 23.25" stroke="#333" stroke-width="1.1" fill="none" /><circle cx="452.5" cy="25.3" r="1.6" fill="#333"/><path d="M517.5 21.5 L521.5 25.5 L525.5 21.5" stroke="#333" stroke-width="1.1" fill="none" /><circle cx="807" cy="21.3" r="4.6" stroke="#424242" stroke-width="1.1" fill="none"/><path d="M803.6 24.7 L798.5 30" stroke="#424242" stroke-width="1.2" fill="none" /><path d="M1795 23.5 H1805" stroke="#333" stroke-width="1" fill="none" /><path d="M1843.5 22.5 H1850.5 V29 H1843.5 Z M1845.5 22.5 V20 H1852.5 V27 H1850.5" stroke="#333" stroke-width="1" fill="none" /><path d="M1706 58.5 H1716 V65.5 H1709.5 L1707 68 V65.5 H1706 Z" stroke="#333" stroke-width="1.1" fill="none" /><path d="M1826 63 V68.5 H1835.5 V65 M1829 65.5 C1829.5 61.5 1832 60 1836 60 M1833.5 57.5 L1836.3 60 L1833.5 62.5" stroke="#fff" stroke-width="1.1" fill="none" /><path d="M119.5 83 V172" stroke="#e0e0e0" stroke-width="1" fill="none" /><path d="M355.5 83 V172" stroke="#e0e0e0" stroke-width="1" fill="none" /><path d="M501.5 89 V151" stroke="#e0e0e0" stroke-width="1" fill="none" /><path d="M746.8 83 V172" stroke="#e0e0e0" stroke-width="1" fill="none" /><path d="M908.5 83 V172" stroke="#e0e0e0" stroke-width="1" fill="none" /><path d="M1177 83 V172" stroke="#e0e0e0" stroke-width="1" fill="none" /><path d="M1342 83 V172" stroke="#e0e0e0" stroke-width="1" fill="none" /><path d="M1534.5 83 V172" stroke="#e0e0e0" stroke-width="1" fill="none" /><path d="M1630.5 83 V172" stroke="#e0e0e0" stroke-width="1" fill="none" /><path d="M1708.5 83 V172" stroke="#e0e0e0" stroke-width="1" fill="none" /><path d="M1792.5 83 V172" stroke="#e0e0e0" stroke-width="1" fill="none" /><path d="M108.5 172 V164.5 H116 M110.5 166.5 L115.5 171.5 M112 171.5 H115.5 V168" stroke="#555" stroke-width="0.9" fill="none" /><path d="M344.5 172 V164.5 H352 M346.5 166.5 L351.5 171.5 M348 171.5 H351.5 V168" stroke="#555" stroke-width="0.9" fill="none" /><path d="M735.5 172 V164.5 H743 M737.5 166.5 L742.5 171.5 M739 171.5 H742.5 V168" stroke="#555" stroke-width="0.9" fill="none" /><path d="M897.5 172 V164.5 H905 M899.5 166.5 L904.5 171.5 M901 171.5 H904.5 V168" stroke="#555" stroke-width="0.9" fill="none" /><path d="M30.5 92 H34 M47 92 H50.5 V99 M43 114.5 H30.5 V92" stroke="#d86b00" stroke-width="1.6" fill="none" /><rect x="32" y="93.5" width="17" height="19.5" rx="0" fill="#fde9b3" /><rect x="33" y="95" width="14" height="17" rx="0" fill="#f7f7f7" /><path d="M34.5 94.5 V91 H38 C38 86.5 43 86.5 43 91 H46.5 V94.5 Z" stroke="#616161" stroke-width="1.1" fill="#fff" /><rect x="43.5" y="99.5" width="13" height="16.5" rx="0" fill="#fafafa" stroke="#333" stroke-width="1.2"/><path d="M37.9 143.0 L40.4 146.0 L42.9 143.0" stroke="#333" stroke-width="1.1" fill="none" /><path d="M73 86.5 L78.5 98 M79 86.5 L73.5 98" stroke="#444" stroke-width="1" fill="none" /><circle cx="73" cy="100.2" r="2" stroke="#1e8bcd" stroke-width="1.2" fill="#fff"/><circle cx="79" cy="100.2" r="2" stroke="#1e8bcd" stroke-width="1.2" fill="#fff"/><path d="M75.5 112.5 H68.5 V125.5 H74.5" stroke="#333" stroke-width="1.1" fill="none" /><path d="M74.5 115.5 H80.5 L83.5 118.5 V127.5 H74.5 Z M77 121 H81 M77 123.5 H81" stroke="#333" stroke-width="1.1" fill="#fafafa" /><path d="M97.0 119.0 L99.5 122.0 L102.0 119.0" stroke="#333" stroke-width="1.1" fill="none" /><path d="M68.8 145.2 L75.2 142 L80.6 147.6 L75.2 152.3 Z" stroke="#d86b00" stroke-width="1.3" fill="#fff" /><path d="M70.5 146 L79.5 148.3 L75.2 151.5 Z" stroke="none" stroke-width="1" fill="#f9d77e" /><path d="M70.3 145.8 L79.6 148.4" stroke="#d86b00" stroke-width="1.1" fill="none" /><path d="M75.3 141.7 L76.6 140.4 L78.2 141.8 L82.3 137.8 C83 137.1 84.3 138.3 83.6 139 L79.6 143.2 L81.3 144.8 L80.4 147.3 Z" stroke="#333" stroke-width="1.1" fill="#fff" /><path d="M241.55 100.7 L244.3 103.89999999999999 L247.05 100.7" stroke="#333" stroke-width="1.2" fill="none" /><path d="M286.45 100.7 L289.2 103.89999999999999 L291.95 100.7" stroke="#333" stroke-width="1.2" fill="none" /><path d="M314.5 97 L316.5 95 L318.5 97" stroke="#333" stroke-width="0.9" fill="none" /><path d="M339.5 95 L341.5 97 L343.5 95" stroke="#1e8bcd" stroke-width="1.1" fill="none" /><path d="M188 139.5 H196" stroke="#333" stroke-width="1" fill="none" /><path d="M207.75 132.6 L210.5 135.79999999999998 L213.25 132.6" stroke="#333" stroke-width="1.2" fill="none" /><path d="M251.45 132.6 L254.2 135.79999999999998 L256.95 132.6" stroke="#333" stroke-width="1.2" fill="none" /><path d="M295.85 132.6 L298.6 135.79999999999998 L301.35 132.6" stroke="#333" stroke-width="1.2" fill="none" /><path d="M336.65 132.6 L339.4 135.79999999999998 L342.15 132.6" stroke="#333" stroke-width="1.2" fill="none" /><path d="M221.5 122 V145.5 M265.6 122 V145.5" stroke="#e0e0e0" stroke-width="1" fill="none" /><path d="M228 126.5 h1 M228 133.5 h1 M230 126.5 h1 M230 133.5 h1 M232 126.5 h1 M232 133.5 h1 M234 126.5 h1 M234 133.5 h1 M236 126.5 h1 M236 133.5 h1 M238 126.5 h1 M238 133.5 h1 M240 126.5 h1 M240 133.5 h1 M242 126.5 h1 M242 133.5 h1 M228 126.5 h1 M235.5 126.5 h1 M243 126.5 h1 M228 128.5 h1 M235.5 128.5 h1 M243 128.5 h1 M228 130.5 h1 M235.5 130.5 h1 M243 130.5 h1 M228 132.5 h1 M235.5 132.5 h1 M243 132.5 h1 M228 134.5 h1 M235.5 134.5 h1 M243 134.5 h1 M228 136.5 h1 M235.5 136.5 h1 M243 136.5 h1 M228 138.5 h1 M235.5 138.5 h1 M243 138.5 h1" stroke="#555" stroke-width="1"/><path d="M228 140.5 H244" stroke="#333" stroke-width="1.4" fill="none" /><path d="M276 130.5 L281.5 125 V128 L286.5 133 L281.5 138 Z" stroke="#333" stroke-width="1.1" fill="none" /><path d="M284.5 129 C286 127.5 287 128.5 287 131 V134" stroke="#1e8bcd" stroke-width="1.2" fill="none" /><rect x="271.6" y="138" width="16" height="4" rx="0" fill="#ffff00" /><rect x="312.7" y="138" width="16" height="4" rx="0" fill="#ff0000" /><path d="M314.5 137 L320.5 125.5 L326.5 137 M316.5 133 H324.5" stroke="#333" stroke-width="1.1" fill="none" /><path d="M165 128.5 H170.5 M161.5 137 H167 M168 128.5 L164 137" stroke="#333" stroke-width="1" fill="none" /><rect x="416.5" y="90.5" width="23" height="23" rx="4" fill="#e6e6e6" stroke="#8a8a8a" stroke-width="1"/><path d="M369 94.5 H383 M371 98.5 H381 M369 102.5 H383" stroke="#333" stroke-width="1" fill="none" /><path d="M395 97.5 H409 M397 101.5 H407 M395 105.5 H409" stroke="#333" stroke-width="1" fill="none" /><path d="M421 101.5 H435 M423 105.5 H433 M421 109.5 H435" stroke="#333" stroke-width="1" fill="none" /><path d="M442.5 90 V113.5 M442.5 122 V145.7" stroke="#d0d0d0" stroke-width="1" fill="none" /><path d="M454.3 108.8 L465 98.3 M460.5 98.3 H465 V102.8" stroke="#1e8bcd" stroke-width="1.1" fill="none" /><text x="0" y="0" transform="translate(451.5 104.5) rotate(-45)" font-family="Liberation Sans" font-size="10" fill="#444">ab</text><path d="M470.65 101.0 L473.4 103.80000000000001 L476.15 101.0" stroke="#333" stroke-width="1.2" fill="none" /><path d="M369 127.5 H383 M369 131.5 H379 M369 135.5 H383 M369 139.5 H379" stroke="#333" stroke-width="1" fill="none" /><path d="M395 127.5 H409 M397 131.5 H407 M395 135.5 H409 M397 139.5 H407" stroke="#333" stroke-width="1" fill="none" /><path d="M421 127.5 H435 M425 131.5 H435 M421 135.5 H435 M425 139.5 H435" stroke="#333" stroke-width="1" fill="none" /><path d="M450 127.5 H464 M450 139.5 H464 M458 131.5 H464 M458 135.5 H464" stroke="#333" stroke-width="1" fill="none" /><path d="M450.5 133.5 H456 M453 131 L450.5 133.5 L453 136" stroke="#1e8bcd" stroke-width="1.2" fill="none" /><path d="M476 127.5 H490 M476 139.5 H490 M484.5 131.5 H490 M484.5 135.5 H490" stroke="#333" stroke-width="1" fill="none" /><path d="M476 133.5 H481.5 M479 131 L481.5 133.5 L479 136" stroke="#1e8bcd" stroke-width="1.2" fill="none" /><path d="M527.8 101.8 C528.8 105.5 526.5 106.8 521.2 106.8 M523.6 104.4 L521.2 106.8 L523.6 109.2" stroke="#1e8bcd" stroke-width="1.1" fill="none" /><path d="M512.5 125.5 H527 V140.5 H512.5 Z M512.5 130 H527 M512.5 136 H527 M519.8 125.5 V130 M519.8 136 V140.5 M514.5 133 H525 M516.5 131.5 L514.5 133 L516.5 134.5 M523 131.5 L525 133 L523 134.5" stroke="#b0b0b0" stroke-width="0.9" fill="none" /><path d="M654.8 132.5 L657.3 135.5 L659.8 132.5" stroke="#b0b0b0" stroke-width="1.1" fill="none" /><circle cx="803.6" cy="130.2" r="2.6" stroke="#333" stroke-width="1.1" fill="none"/><circle cx="812.4" cy="137.6" r="2.6" stroke="#333" stroke-width="1.1" fill="none"/><path d="M812.8 127 L802.8 140.8" stroke="#333" stroke-width="1.1" fill="none" /><path d="M891.25 100.9 L894 104.1 L896.75 100.9" stroke="#333" stroke-width="1.2" fill="none" /><path d="M759.5 129.5 H774.5 V138.5 H759.5 Z" stroke="#333" stroke-width="1.1" fill="none" /><text x="761.5" y="137" font-family="Liberation Sans" font-size="8" fill="#333">CC</text><rect x="767.5" y="133.5" width="7" height="8" rx="2" fill="#fff" stroke="#d86b00" stroke-width="1.2"/><path d="M767.5 136 H774.5 M767.5 138.7 H774.5" stroke="#d86b00" stroke-width="1" fill="none" /><path d="M783.0 132.9 L785.5 135.70000000000002 L788.0 132.9" stroke="#333" stroke-width="1.2" fill="none" /><path d="M848.3 122 V146" stroke="#d0d0d0" stroke-width="1" fill="none" /><text x="863" y="132.3" font-family="Liberation Sans" font-size="8.5" fill="#333">,0</text><text x="857.5" y="141" font-family="Liberation Sans" font-size="8.5" fill="#333">,00</text><path d="M855.5 130.5 H864 M858.5 127.5 L855.5 130.5 L858.5 133.5" stroke="#1e8bcd" stroke-width="1.2" fill="none" /><text x="883.5" y="132.3" font-family="Liberation Sans" font-size="8.5" fill="#333">,00</text><text x="889.5" y="141" font-family="Liberation Sans" font-size="8.5" fill="#333">,0</text><path d="M881 137.7 H889.5 M886.5 134.7 L889.5 137.7 L886.5 140.7" stroke="#1e8bcd" stroke-width="1.2" fill="none" /><rect x="954.5" y="90.5" width="12.5" height="7" rx="0" fill="#f4a6b0" stroke="#d23030" stroke-width="1"/><rect x="954.5" y="97.5" width="8" height="7" rx="0" fill="#8fc0ec" stroke="#1e6fc0" stroke-width="1"/><rect x="954.5" y="104.5" width="14" height="7" rx="0" fill="#f4a6b0" stroke="#d23030" stroke-width="1"/><path d="M949.5 90.5 H976.5 V111.5 H949.5 Z M949.5 97.5 H976.5 M949.5 104.5 H976.5 M971.5 90.5 V111.5" stroke="#333" stroke-width="1" fill="none" /><rect x="1057.5" y="97.5" width="18.5" height="14" rx="0" fill="#8fc0ec" stroke="#1e6fc0" stroke-width="1"/><path d="M1048.5 90.5 H1076 V111.5 H1048.5 Z M1048.5 97.5 H1076 M1048.5 104.5 H1076 M1057.5 90.5 V111.5 M1066.5 90.5 V111.5" stroke="#333" stroke-width="1" fill="none" /><path d="M1078 98 L1066 109" stroke="#555" stroke-width="3.2" fill="none" /><path d="M1078 98 L1066 109" stroke="#fff" stroke-width="1.6" fill="none" /><path d="M1064 108 C1060 109 1061 114 1056 116.5 C1062 117 1066 115 1067 111 Z" stroke="#1e6fc0" stroke-width="1" fill="#8fc0ec" /><rect x="1133.5" y="94.5" width="21.5" height="13" rx="0" fill="#8fc0ec" stroke="#1e6fc0" stroke-width="1"/><path d="M1128.5 90.5 H1155.5 V111.5 H1128.5 Z M1128.5 94.5 H1133.5 M1133.5 90.5 V111.5" stroke="#333" stroke-width="1" fill="none" /><path d="M1157.5 98 L1145.5 109" stroke="#555" stroke-width="3.2" fill="none" /><path d="M1157.5 98 L1145.5 109" stroke="#fff" stroke-width="1.6" fill="none" /><path d="M1143.5 108 C1139.5 109 1140.5 114 1135.5 116.5 C1141.5 117 1145.5 115 1146.5 111 Z" stroke="#1e6fc0" stroke-width="1" fill="#8fc0ec" /><path d="M999.25 142.4 L1001.5 145.20000000000002 L1003.75 142.4" stroke="#333" stroke-width="1.1" fill="none" /><path d="M1087.95 142.4 L1090.2 145.20000000000002 L1092.45 142.4" stroke="#333" stroke-width="1.1" fill="none" /><path d="M1160.15 142.4 L1162.4 145.20000000000002 L1164.65 142.4" stroke="#333" stroke-width="1.1" fill="none" /><rect x="1198.5" y="97.5" width="24" height="7" rx="0" fill="#8fc0ec" stroke="#1e6fc0" stroke-width="1"/><path d="M1193.5 97.5 V90.5 H1220.5 V97.5 M1193.5 104.5 V111.5 H1220.5 V104.5 M1202.5 90.5 V97.5 M1211.5 90.5 V97.5 M1202.5 104.5 V111.5 M1211.5 104.5 V111.5" stroke="#333" stroke-width="1" fill="none" /><path d="M1211.5 97.5 V104.5" stroke="#1e6fc0" stroke-width="1" fill="none" /><path d="M1204.5 101 H1193 M1197.5 95 L1191.5 101 L1197.5 107" stroke="#fff" stroke-width="3" fill="none" /><path d="M1204.5 101 H1193 M1197.5 95 L1191.5 101 L1197.5 107" stroke="#1e8bcd" stroke-width="1.2" fill="none" /><path d="M1246.5 97.5 V90.5 H1273.5 V96 M1246.5 104.5 V111.5 H1273.5 V106 M1255.5 90.5 V97.5 M1264.5 90.5 V96 M1255.5 104.5 V111.5 M1264.5 106 V111.5" stroke="#333" stroke-width="1" fill="none" /><path d="M1250.5 97.5 H1263.5 L1267 101 L1263.5 104.5 H1250.5 Z" stroke="#1e6fc0" stroke-width="1" fill="#8fc0ec" /><path d="M1255.5 97.5 V104.5" stroke="#1e6fc0" stroke-width="1" fill="none" /><path d="M1264.5 96 L1275 106.5 M1275 96 L1264.5 106.5" stroke="#e84a4a" stroke-width="1.2" fill="none" /><rect x="1306.5" y="97.5" width="14" height="7" rx="0" fill="#8fc0ec" stroke="#1e6fc0" stroke-width="1"/><path d="M1299.5 90.5 H1326.5 V111.5 H1299.5 Z M1306.5 90.5 V97.5 M1320.5 90.5 V97.5 M1306.5 104.5 V111.5 M1320.5 104.5 V111.5 M1299.5 97.5 H1306.5 M1320.5 97.5 H1326.5 M1299.5 104.5 H1306.5 M1320.5 104.5 H1326.5" stroke="#333" stroke-width="1" fill="none" /><path d="M1305.5 86.5 H1320.5 M1305.5 85 V88 M1320.5 85 V88" stroke="#1e8bcd" stroke-width="1" fill="none" /><path d="M1204.0 142.5 L1206.5 145.5 L1209.0 142.5" stroke="#333" stroke-width="1.1" fill="none" /><path d="M1257.0 142.5 L1259.5 145.5 L1262.0 142.5" stroke="#333" stroke-width="1.1" fill="none" /><path d="M1310.0 142.5 L1312.5 145.5 L1315.0 142.5" stroke="#333" stroke-width="1.1" fill="none" /><path d="M1369 89.5 V87.5 H1357.5 L1363.5 94 L1357.5 100.5 H1369 V98.5" stroke="#333" stroke-width="1" fill="none" /><path d="M1383.65 93.0 L1386.4 95.80000000000001 L1389.15 93.0" stroke="#333" stroke-width="1.2" fill="none" /><path d="M1355.5 113.5 H1370.5 V126.5 H1355.5 Z M1355.5 116.5 H1370.5" stroke="#333" stroke-width="1" fill="none" /><path d="M1362.5 117.5 V124 M1359.8 121.2 L1362.5 124 L1365.2 121.2" stroke="#1e8bcd" stroke-width="1.1" fill="none" /><path d="M1376.75 119.1 L1379.5 121.9 L1382.25 119.1" stroke="#333" stroke-width="1.2" fill="none" /><path d="M1356 146 L1359.5 142.5 L1366 149 L1362.5 152.5 Z" stroke="none" stroke-width="1" fill="#dba6e6" /><path d="M1356 146 L1364 138 L1370.5 144.5 L1362.5 152.5 Z M1359.5 142.5 L1366 149" stroke="#a33ab8" stroke-width="1.2" fill="none" /><path d="M1376.75 145.1 L1379.5 147.9 L1382.25 145.1" stroke="#333" stroke-width="1.2" fill="none" /><path d="M1409.5 99.5 L1414 88.5 L1418.5 99.5 M1411.2 95.5 H1416.8" stroke="#1e8bcd" stroke-width="1.2" fill="none" /><path d="M1409.5 102.5 H1418 L1409.5 113.3 H1418.5" stroke="#333" stroke-width="1.1" fill="none" /><path d="M1421.5 94.5 H1437 L1430.5 102 V109.5 H1427.5 V102 Z" stroke="#333" stroke-width="1.1" fill="none" /><path d="M1435.55 142.1 L1437.8 144.9 L1440.05 142.1" stroke="#333" stroke-width="1.2" fill="none" /><path d="M1517.35 142.1 L1519.6 144.9 L1521.85 142.1" stroke="#333" stroke-width="1.2" fill="none" /><circle cx="1489.5" cy="97.5" r="10.2" stroke="#333" stroke-width="1.2" fill="none"/><path d="M1482.3 104.7 L1472 115.3" stroke="#333" stroke-width="1.3" fill="none" /><path d="M1568.5 87.5 H1596.5 V114.5 H1568.5 Z M1571.5 90.5 H1580.5 V99.5 H1571.5 Z M1584.5 90.5 H1593.5 V99.5 H1584.5 Z M1571.5 102.5 H1580.5 V111.5 H1571.5 Z M1584.5 102.5 H1593.5 V111.5 H1584.5 Z" stroke="#d84315" stroke-width="1.1" fill="none" /><rect x="1657" y="88" width="26" height="3" rx="0" fill="#c4c4c4" /><path d="M1656.5 87.5 H1683.5 V114.5 H1656.5 Z" stroke="#333" stroke-width="1" fill="none" /><path d="M1656.5 99.5 H1661 M1677 99.5 H1683.5 M1656.5 106.5 H1683.5 M1665.5 106.5 V114.5 M1674.5 106.5 V114.5" stroke="#777" stroke-width="0.9" fill="none" /><circle cx="1669" cy="98.7" r="8" fill="#fff" stroke="#333" stroke-width="1.1"/><rect x="1664.7" y="97.5" width="2.4" height="4.8" rx="0" fill="#ccc" stroke="#555" stroke-width="0.6"/><rect x="1667.6" y="93.8" width="2.4" height="8.5" rx="0" fill="#fff" stroke="#555" stroke-width="0.6"/><rect x="1670.6" y="95.2" width="2.6" height="7.1" rx="0" fill="#8fc0ec" stroke="#1e6fc0" stroke-width="0.7"/><path d="M1674.4 104.6 L1683.8 114.4" stroke="#333" stroke-width="1.2" fill="none" /><path d="M1749 111.5 H1743.5 Q1741.5 111.5 1741.5 109.5 V91.5 Q1741.5 89.5 1743.5 89.5 H1754 L1759.5 95 V103" stroke="#2b79d0" stroke-width="1.1" fill="none" /><path d="M1750.5 93.5 V98.5 L1746.5 104 M1750.5 98.5 L1756 101.5 M1745.5 104 H1748 M1755 100 L1756.5 101.5 L1755 103" stroke="#2b79d0" stroke-width="0.8" fill="none" /><rect x="-4" y="-2" width="8" height="4" rx="2" transform="translate(1756 112.8) rotate(-45)" fill="none" stroke="#2b79d0" stroke-width="1.1"/><rect x="-4" y="-2" width="8" height="4" rx="2" transform="translate(1761.8 106.8) rotate(-45)" fill="none" stroke="#2b79d0" stroke-width="1.1"/><rect x="1817" y="87" width="28" height="27" rx="5" fill="#b30b00" /><path d="M1831.2 93 C1830 93.3 1830.3 97.5 1832 100.8 C1833.5 103.5 1836 105 1838.5 104.2 C1840 103.6 1838.8 102.2 1836.5 102.2 C1833 102.2 1829 104 1826.5 107.8 C1825.2 109.8 1826.6 110.5 1827.6 109.2 C1829.5 106.8 1831.5 101 1831.8 96 C1831.9 93.8 1831.8 92.9 1831.2 93 Z" stroke="#fff" stroke-width="1.3" fill="none" /></svg>
</body></html>
